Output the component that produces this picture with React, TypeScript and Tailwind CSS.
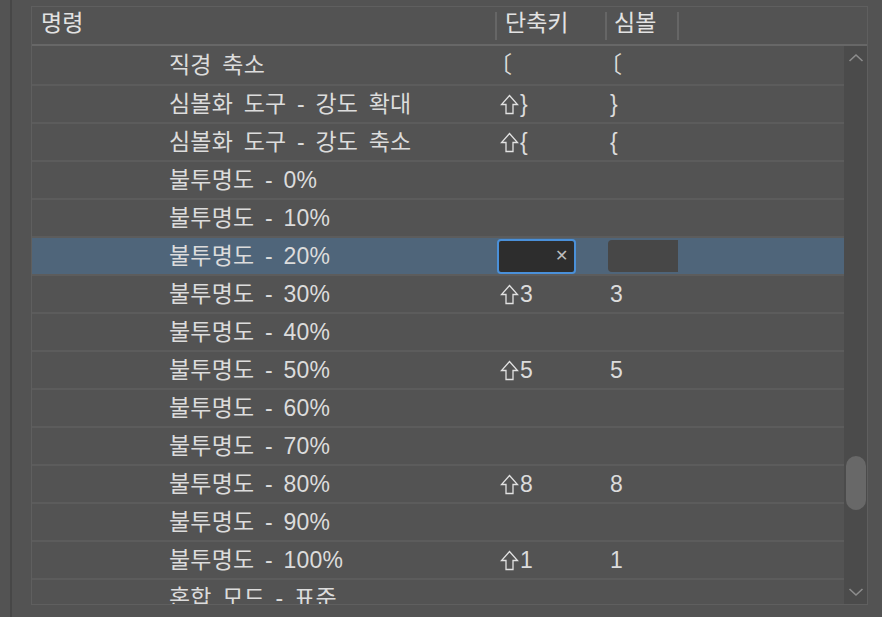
import React from "react";

type Row = { name: string; key?: string; shift?: boolean; sym?: string; selected?: boolean };

const rows: Row[] = [
  { name: "직경 축소", key: "〔", sym: "〔" },
  { name: "심볼화 도구 - 강도 확대", key: "}", shift: true, sym: "}" },
  { name: "심볼화 도구 - 강도 축소", key: "{", shift: true, sym: "{" },
  { name: "불투명도 - 0%" },
  { name: "불투명도 - 10%" },
  { name: "불투명도 - 20%", selected: true },
  { name: "불투명도 - 30%", key: "3", shift: true, sym: "3" },
  { name: "불투명도 - 40%" },
  { name: "불투명도 - 50%", key: "5", shift: true, sym: "5" },
  { name: "불투명도 - 60%" },
  { name: "불투명도 - 70%" },
  { name: "불투명도 - 80%", key: "8", shift: true, sym: "8" },
  { name: "불투명도 - 90%" },
  { name: "불투명도 - 100%", key: "1", shift: true, sym: "1" },
  { name: "혼합 모드 - 표준" },
];

const ShiftIcon = () => (
  <svg width="19" height="21" viewBox="0 0 19 21" className="mr-[1px] shrink-0">
    <path d="M9.5 1.5 L17.5 10.5 L13 10.5 L13 19.5 L6 19.5 L6 10.5 L1.5 10.5 Z" fill="none" stroke="#e2e2e2" strokeWidth="1.3" strokeLinejoin="miter" />
  </svg>
);

const App = () => {
  return (
    <div
      className="w-[882px] h-[617px] bg-[#535353] flex overflow-hidden text-[#dcdcdc]"
      style={{ fontFamily: '"Liberation Sans", "Noto Sans CJK KR", sans-serif' }}
    >
      <div className="w-[10px] shrink-0" />
      <div className="w-[2px] shrink-0 bg-[#474747]" />
      <div className="w-[19px] shrink-0" />
      <div className="mt-[6px] w-[837px] h-[599px] border border-[#5f5f5f] flex flex-col">
        {/* header */}
        <div className="h-[39px] shrink-0 border-b-2 border-[#676767] flex items-center text-[23px] text-[#e2e2e2]">
          <div className="w-[463px] pl-[9px] leading-none pb-[4px]">명령</div>
          <div className="w-[110px] h-[28px] border-l-2 border-[#666] pl-[8px] flex items-center pb-[4px]">단축키</div>
          <div className="w-[74px] h-[28px] border-l-2 border-r-2 border-[#666] pl-[7px] flex items-center pb-[4px]">심볼</div>
        </div>
        {/* body */}
        <div className="flex flex-1 min-h-0">
          <div className="w-[812px] overflow-hidden text-[23px]">
            {rows.map((r, i) => (
              <div
                key={r.name}
                className={`h-[38px] flex items-center ${i > 0 ? "border-t-2 border-[#5c5c5c]" : ""} ${r.selected ? "bg-[#4f657a]" : ""}`}
              >
                <div className="w-[463px] pl-[137px] whitespace-nowrap [word-spacing:4px] tracking-[0.2px]">{r.name}</div>
                <div className="w-[110px] pl-[5px] flex items-center">
                  {r.selected ? (
                    <div className="ml-[-3px] w-[79px] h-[35px] rounded-[4px] border-2 border-[#4a90d9] bg-[#2d2d2d] flex items-center justify-end pr-[6px]">
                      <span className="text-[16px] text-[#bdbdbd] leading-none">✕</span>
                    </div>
                  ) : (
                    <>
                      {r.shift && <ShiftIcon />}
                      {r.key && (
                        <span className={r.key === "〔" ? "ml-[-11px]" : ""}>{r.key}</span>
                      )}
                    </>
                  )}
                </div>
                <div className="flex items-center pl-[3px]">
                  {r.selected ? (
                    <div className="w-[70px] h-[32px] rounded-l-[4px] bg-[#474747]" />
                  ) : (
                    r.sym && (
                      <span className={`pl-[2px] ${r.sym === "〔" ? "ml-[-11px]" : ""}`}>{r.sym}</span>
                    )
                  )}
                </div>
              </div>
            ))}
          </div>
          {/* scrollbar */}
          <div className="w-[23px] bg-[#4b4b4b] flex flex-col items-center">
            <svg width="16" height="10" viewBox="0 0 16 10" className="mt-[7px]">
              <path d="M1.5 8 L8 2 L14.5 8" fill="none" stroke="#8d8d8d" strokeWidth="1.6" />
            </svg>
            <div className="flex-1 w-full flex flex-col items-center">
              <div className="mt-[393px] w-[20px] h-[54px] rounded-full bg-[#686868]" />
            </div>
            <svg width="16" height="10" viewBox="0 0 16 10" className="mb-[7px]">
              <path d="M1.5 2 L8 8 L14.5 2" fill="none" stroke="#8d8d8d" strokeWidth="1.6" />
            </svg>
          </div>
        </div>
      </div>
    </div>
  );
};

export default App;
